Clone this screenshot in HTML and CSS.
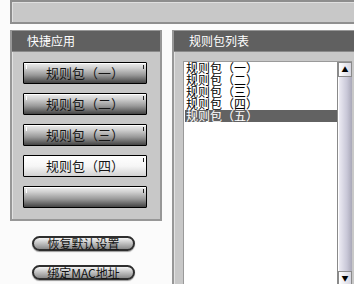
FILE: index.html
```html
<!DOCTYPE html>
<html lang="zh-CN">
<head>
  <meta charset="UTF-8">
  <title>规则包</title>
  <link rel="stylesheet" href="styles.css">
</head>
<body>
  <div class="topbar"></div>

  <div class="main">
    <div class="left">
      <div class="panel quick">
        <div class="panel-title">快捷应用</div>
        <div class="quick-list">
          <button class="rule-btn">规则包（一）</button>
          <button class="rule-btn">规则包（二）</button>
          <button class="rule-btn">规则包（三）</button>
          <button class="rule-btn active">规则包（四）</button>
          <button class="rule-btn"></button>
        </div>
      </div>
      <div class="actions">
        <button class="pill">恢复默认设置</button>
        <button class="pill">绑定MAC地址</button>
      </div>
    </div>

    <div class="panel rules">
      <div class="panel-title">规则包列表</div>
      <div class="listbox">
        <ul class="items">
          <li>规则包（一）</li>
          <li>规则包（二）</li>
          <li>规则包（三）</li>
          <li>规则包（四）</li>
          <li class="selected">规则包（五）</li>
        </ul>
        <div class="scrollbar">
          <div class="arrow">&#9650;</div>
          <div class="track"></div>
          <div class="arrow">&#9660;</div>
        </div>
      </div>
    </div>
  </div>
</body>
</html>
```

FILE: styles.css
```css
body {
  margin: 0;
  padding: 0 0 0 10px;
  background: #fbfbfb;
  font-family: "Noto Sans CJK SC", "DejaVu Sans", sans-serif;
  font-size: 12px;
  overflow: hidden;
  height: 284px;
}
.topbar {
  height: 20px;
  background: #c8c8c8;
  border: 2px solid #8e8e8e;
  border-right: none;
  box-shadow: inset 1px 1px 0 #e0e0e0;
}
.main {
  display: flex;
  margin-top: 6px;
  height: 254px;
}
.left {
  width: 152px;
  flex: none;
}
.panel {
  background: #c8c8c8;
  border: 2px solid #979797;
  border-top-width: 1px;
  box-shadow: inset 1px 0 0 #e2e2e2;
}
.panel-title {
  height: 20px;
  line-height: 19px;
  background: #606060;
  color: #fff;
  font-size: 12px;
  padding-left: 15px;
  border-bottom: 1px solid #8a8a8a;
}
.quick {
  height: 188px;
}
.quick-list {
  display: flex;
  flex-direction: column;
  gap: 9px;
  padding: 10px 0 0 11px;
}
.rule-btn {
  position: relative;
  width: 124px;
  height: 22px;
  padding: 0;
  border: 1px solid #000;
  border-radius: 1px;
  background: linear-gradient(#eeeeee 0%, #d0d0d0 25%, #999999 60%, #444444 100%);
  box-shadow: inset 0 1px 0 #fff;
  font-family: "Noto Sans CJK SC", sans-serif;
  font-size: 13px;
  line-height: 20px;
  color: #151515;
}
.rule-btn::before,
.rule-btn::after {
  content: "";
  position: absolute;
  top: 2px;
  width: 1px;
  height: 4px;
  background: #222;
}
.rule-btn::before { left: 2px; background: #fff; }
.rule-btn::after { right: 2px; }
.rule-btn.active {
  background: linear-gradient(#ffffff 0%, #f6f6f6 50%, #d2d2d2 100%);
}
.actions {
  display: flex;
  flex-direction: column;
  gap: 14px;
  padding: 15px 0 0 22px;
}
.pill {
  width: 103px;
  height: 15px;
  padding: 0;
  border: 2px solid #2e2e2e;
  border-radius: 8px;
  background: linear-gradient(#f4f4f4 0%, #c4c4c4 45%, #8a8a8a 100%);
  box-shadow: 0 1px 1px #999;
  font-family: "Noto Sans CJK SC", sans-serif;
  font-size: 12px;
  line-height: 11px;
  color: #111;
}
.rules {
  flex: 1;
  margin-left: 10px;
  border-right: none;
  border-bottom: none;
}
.listbox {
  display: flex;
  margin: 9px 2px 0 9px;
  height: 224px;
  border-top: 1px solid #9a9a9a;
  border-left: 1px solid #9a9a9a;
  background: #fff;
}
.items {
  list-style: none;
  margin: 0;
  padding: 0 0 0 1px;
  flex: 1;
}
.items li {
  height: 12px;
  line-height: 12px;
  font-size: 12px;
  color: #000;
  padding-left: 1px;
}
.items li.selected {
  background: #626262;
  color: #fff;
}
.scrollbar {
  width: 14px;
  display: flex;
  flex-direction: column;
  border-left: 1px solid #8a8a8a;
  background: #c8c8c8;
}
.arrow {
  height: 13px;
  border: 1px solid #8a8a8a;
  background: linear-gradient(90deg, #ffffff, #d6d6e0);
  font-size: 7px;
  line-height: 13px;
  text-align: center;
  color: #000;
}
.track {
  flex: 1;
  background: linear-gradient(90deg, #ecebf3 0%, #c9c8d8 60%, #a9a8b8 100%);
  border-left: 1px solid #fff;
}
```
